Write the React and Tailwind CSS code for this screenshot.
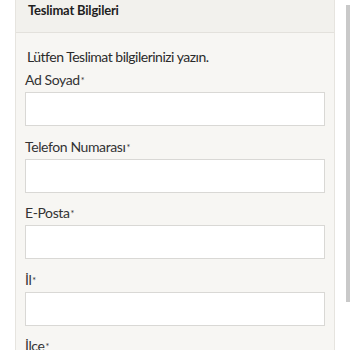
export default function App() {
    const fields = ['Ad Soyad', 'Telefon Numarası', 'E-Posta', 'İl', 'İlçe'];

    return (
        <div className="w-[350px] h-[350px] overflow-hidden bg-white flex" style={{ fontFamily: 'Lato, "Noto Sans", sans-serif' }}>
            {/* Card */}
            <div className="ml-[15px] w-[320px] shrink-0 border-x border-[#e6e4df] bg-[#f7f6f3]">
                <div className="h-[33px] bg-[#f2f1ed] border-b border-[#e3e1dc] px-[12px]">
                    <h2 className="text-[13px] font-bold text-[#1f1f1f] leading-[20px] tracking-[-0.2px]">Teslimat Bilgileri</h2>
                </div>
                <div className="px-[9px] pt-[13px]">
                    <p className="pl-[2px] text-[14px] text-[#2b2b2b] leading-[22px] tracking-[-0.5px]">Lütfen Teslimat bilgilerinizi yazın.</p>
                    <div className="mt-[2px] flex flex-col gap-[10.5px]">
                        {fields.map((f) => (
                            <div key={f}>
                                <label className="block text-[14px] text-[#333] leading-[20px] mb-[2px] tracking-[-0.4px]">
                                    {f}<span className="text-[9px] align-top relative top-[1px] ml-[1px]">*</span>
                                </label>
                                <div className="h-[34px] bg-white border border-[#d9d8d5]"></div>
                            </div>
                        ))}
                    </div>
                </div>
            </div>
            {/* Scrollbar */}
            <div className="ml-[11px] mt-[5px] w-[4px] h-[297px] bg-[#c9c9c9]"></div>
        </div>
    );
}
